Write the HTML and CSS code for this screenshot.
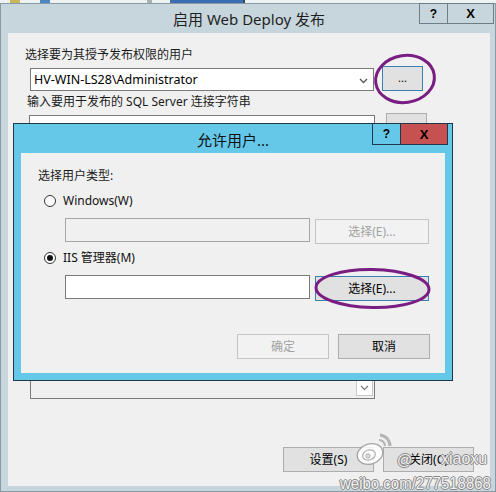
FILE: index.html
```html
<!DOCTYPE html>
<html lang="zh-CN">
<head>
<meta charset="utf-8">
<title>启用 Web Deploy 发布</title>
<link rel="stylesheet" href="styles.css">
</head>
<body>
<div class="desk">
  <div class="taskstrip">
    <span class="tk tk1"></span><span class="tk tk2"></span><span class="tk tk3"></span><span class="tk tk4"></span>
  </div>
  <div class="outer">
    <div class="titlebar">
      <span class="title">启用 Web Deploy 发布</span>
      <div class="caps">
        <span class="cap">?</span><span class="cap capx">X</span>
      </div>
    </div>
    <div class="client">
      <div class="label l1">选择要为其授予发布权限的用户</div>
      <div class="row r1">
        <div class="combo c1">
          <span class="ctext">HV-WIN-LS28\Administrator</span>
          <svg class="chev" width="9" height="6" viewBox="0 0 9 6"><path d="M1 1 L4.5 4.5 L8 1" fill="none" stroke="#555" stroke-width="1.3"/></svg>
        </div>
        <button class="btn focus dots">...</button>
      </div>
      <div class="label l2">输入要用于发布的 SQL Server 连接字符串</div>
      <div class="row r2">
        <div class="input i2"></div>
        <button class="btn b2"></button>
      </div>
      <div class="combo c3">
        <span class="abox"><svg width="9" height="6" viewBox="0 0 9 6"><path d="M1 1 L4.5 4.5 L8 1" fill="none" stroke="#777" stroke-width="1.1"/></svg></span>
      </div>
      <div class="actions">
        <button class="btn act">设置(S)</button>
        <button class="btn act">关闭(C)</button>
      </div>
    </div>
  </div>

  <div class="inner">
    <div class="ititle">
      <span class="title">允许用户...</span>
      <div class="icaps">
        <span class="icap">?</span><span class="icap icapx">X</span>
      </div>
    </div>
    <div class="iclient">
      <div class="label">选择用户类型:</div>
      <div class="radiorow rr1"><span class="radio"></span><span class="rlabel">Windows(W)</span></div>
      <div class="fieldrow">
        <div class="input dis"></div>
        <button class="btn disb sel">选择(E)...</button>
      </div>
      <div class="radiorow rr2"><span class="radio on"></span><span class="rlabel">IIS 管理器(M)</span></div>
      <div class="fieldrow">
        <div class="input"></div>
        <button class="btn focus sel">选择(E)...</button>
      </div>
      <div class="ifoot">
        <button class="btn disb fb">确定</button>
        <button class="btn fb">取消</button>
      </div>
    </div>
  </div>

  <svg class="marks" width="496" height="492" viewBox="0 0 496 492">
    <ellipse cx="405" cy="79" rx="29.5" ry="23.5" fill="none" stroke="#7a1d82" stroke-width="3" transform="rotate(-8 405 79)"/>
    <ellipse cx="372.5" cy="288.5" rx="56.5" ry="19" fill="none" stroke="#7a1d82" stroke-width="3" transform="rotate(1 372 288)"/>
  </svg>

  <div class="wm">
    <svg class="wlogo" width="40" height="40" viewBox="0 0 40 40">
      <g opacity="0.85">
        <ellipse cx="16" cy="25" rx="13" ry="10" fill="#fff" stroke="#9a9a9a" stroke-width="1.3" transform="rotate(-18 16 25)"/>
        <ellipse cx="15" cy="26" rx="6.5" ry="5" fill="none" stroke="#a8a8a8" stroke-width="1.2" transform="rotate(-18 15 26)"/>
        <circle cx="14" cy="27" r="2.2" fill="#ddd" stroke="#999" stroke-width="0.8"/>
        <path d="M26 6 A11 11 0 0 1 36 17" fill="none" stroke="#aaa" stroke-width="3"/>
        <path d="M25 11 A6 6 0 0 1 31 17" fill="none" stroke="#aaa" stroke-width="2.2"/>
      </g>
    </svg>
    <span class="wat">@</span>
    <span class="wname">xiaoxu</span>
    <span class="wurl">weibo.com/277518868</span>
  </div>
</div>
</body>
</html>
```

FILE: styles.css
```css
* { box-sizing: border-box; }
html, body { margin: 0; padding: 0; }
body {
  width: 496px;
  height: 492px;
  overflow: hidden;
  background: #c7d6dd;
  font-family: "Noto Sans", "Noto Sans CJK SC", sans-serif;
  font-size: 12px;
  color: #000;
}
.desk { position: relative; width: 496px; height: 492px; }

.taskstrip {
  height: 3px;
  background: #eef2f3;
  position: relative;
  display: flex;
}
.tk { display: block; height: 3px; }
.tk1 { width: 10px; margin-left: 10px; background: #c9b75a; }
.tk2 { width: 10px; margin-left: 20px; background: #4a86c0; }
.tk3 { width: 5px; margin-left: 97px; background: #a8b2b6; }
.tk4 { width: 75px; margin-left: 18px; background: #3b6fb4; border-right: 2px solid #3a4a55; }

.outer {
  height: 489px;
  border: 1px solid #8a9aa2;
  background: #c7d6dd;
  padding: 0 5px 5px 7px;
}
.titlebar {
  position: relative;
  height: 29px;
  display: flex;
  align-items: center;
  justify-content: center;
}
.title {
  font-size: 15px;
  color: #1e1e1e;
  line-height: 20px;
  padding-top: 1px;
}
.caps {
  position: absolute;
  top: -1px;
  right: -4px;
  display: flex;
}
.cap {
  width: 29px;
  height: 21px;
  border: 1px solid #6e7e86;
  display: flex;
  align-items: center;
  justify-content: center;
  font-family: "Liberation Sans", sans-serif;
  font-weight: 700;
  font-size: 12px;
  line-height: 1;
}
.capx { width: 47px; margin-left: -1px; font-size: 13px; }

.client {
  background: #f0f0f0;
  height: 453px;
  padding: 14px 0 0 17px;
}
.label { line-height: 16px; color: #1a1a1a; white-space: nowrap; }
.l2 { margin-top: 3px; margin-left: 2px; }

.row { display: flex; align-items: flex-end; }
.r1 { margin-top: 3px; }
.r2 { margin-top: 3px; }

.combo {
  position: relative;
  height: 23px;
  border: 1px solid #7a7a7a;
  background: #fff;
  display: flex;
  align-items: center;
}
.c1 { width: 344px; margin-left: 5px; margin-right: 8px; padding-left: 3px; }
.ctext { font-size: 12.5px; color: #000; line-height: 16px; }
.chev { position: absolute; right: 5px; top: 9px; }

.btn {
  display: flex;
  align-items: center;
  justify-content: center;
  background: #e1e1e1;
  border: 1px solid #adadad;
  font-family: "Noto Sans", "Noto Sans CJK SC", sans-serif;
  font-size: 12px;
  color: #000;
  padding: 0;
  margin: 0;
  line-height: 16px;
}
.focus { border-color: #3c7fb1; }
.dots { width: 41px; height: 25px; font-size: 11px; padding-bottom: 2px; }

.input { height: 23px; border: 1px solid #7a7a7a; background: #fff; }
.i2 { width: 346px; margin-left: 4px; margin-right: 11px; }
.b2 { width: 41px; height: 25px; }

.c3 {
  width: 345px;
  margin-left: 5px;
  margin-top: 238px;
  background: #f0f0f0;
  justify-content: flex-end;
  padding-right: 1px;
}
.abox {
  width: 17px;
  height: 17px;
  border: 1px solid #c8c8c8;
  background: #fff;
  display: flex;
  align-items: center;
  justify-content: center;
}

.actions {
  display: flex;
  justify-content: flex-end;
  gap: 9px;
  margin-top: 48px;
  margin-right: 16px;
}
.act { width: 91px; height: 25px; }

/* inner dialog */
.inner {
  position: absolute;
  left: 13px;
  top: 123px;
  width: 440px;
  height: 258px;
  border: 1px solid #20394a;
  background: #65c8e9;
  padding: 0 7px 7px 7px;
}
.ititle {
  position: relative;
  height: 29px;
  display: flex;
  align-items: center;
  justify-content: center;
}
.ititle .title { color: #111; padding-top: 2px; }
.icaps {
  position: absolute;
  top: -1px;
  right: -3px;
  display: flex;
}
.icap {
  width: 29px;
  height: 22px;
  border: 1px solid #20394a;
  display: flex;
  align-items: center;
  justify-content: center;
  font-family: "Liberation Sans", sans-serif;
  font-weight: 700;
  font-size: 12px;
  line-height: 1;
}
.icapx { width: 48px; margin-left: -1px; background: #c75050; font-size: 13px; }

.iclient {
  background: #f0f0f0;
  height: 220px;
  padding: 15px 0 0 17px;
}
.radiorow { display: flex; align-items: center; height: 16px; }
.rr1 { margin-top: 9px; }
.rr2 { margin-top: 6px; }
.radio {
  width: 12px;
  height: 12px;
  margin-left: 6px;
  margin-right: 7px;
  border: 1px solid #333;
  border-radius: 50%;
  background: #fff;
  display: flex;
  align-items: center;
  justify-content: center;
}
.radio.on::after {
  content: "";
  width: 6px;
  height: 6px;
  border-radius: 50%;
  background: #111;
}
.rlabel { line-height: 16px; color: #111; white-space: nowrap; }

.fieldrow { display: flex; align-items: flex-start; margin-top: 9px; margin-left: 27px; }
.fieldrow .input { width: 245px; height: 24px; margin-right: 5px; }
.input.dis { background: #f0f0f0; border-color: #a6a6a6; }
.sel { width: 114px; height: 25px; margin-top: 1px; }
.disb { background: #f2f2f2; border-color: #c4c4c4; color: #a2a2a2; }

.ifoot {
  display: flex;
  justify-content: flex-end;
  gap: 9px;
  margin-top: 33px;
  margin-right: 15px;
}
.fb { width: 92px; height: 25px; }

.marks { position: absolute; left: 0; top: 0; pointer-events: none; }

.wm { position: absolute; left: 0; top: 0; width: 496px; height: 492px; pointer-events: none; }
.wlogo { position: absolute; left: 354px; top: 429px; }
.wat, .wname, .wurl {
  position: absolute;
  font-family: "Liberation Sans", sans-serif;
  color: rgba(255,255,255,0.9);
  text-shadow: 1px 0 0 #8a8a8a, -1px 0 0 #8a8a8a, 0 1px 0 #8a8a8a, 0 -1px 0 #8a8a8a;
  line-height: 1;
  white-space: nowrap;
}
.wat { left: 397px; top: 452px; font-size: 15px; }
.wname { left: 441px; top: 451px; font-size: 16px; }
.wurl { left: 340px; top: 474px; font-size: 15px; transform: scaleY(1.15); transform-origin: left top; }
```
